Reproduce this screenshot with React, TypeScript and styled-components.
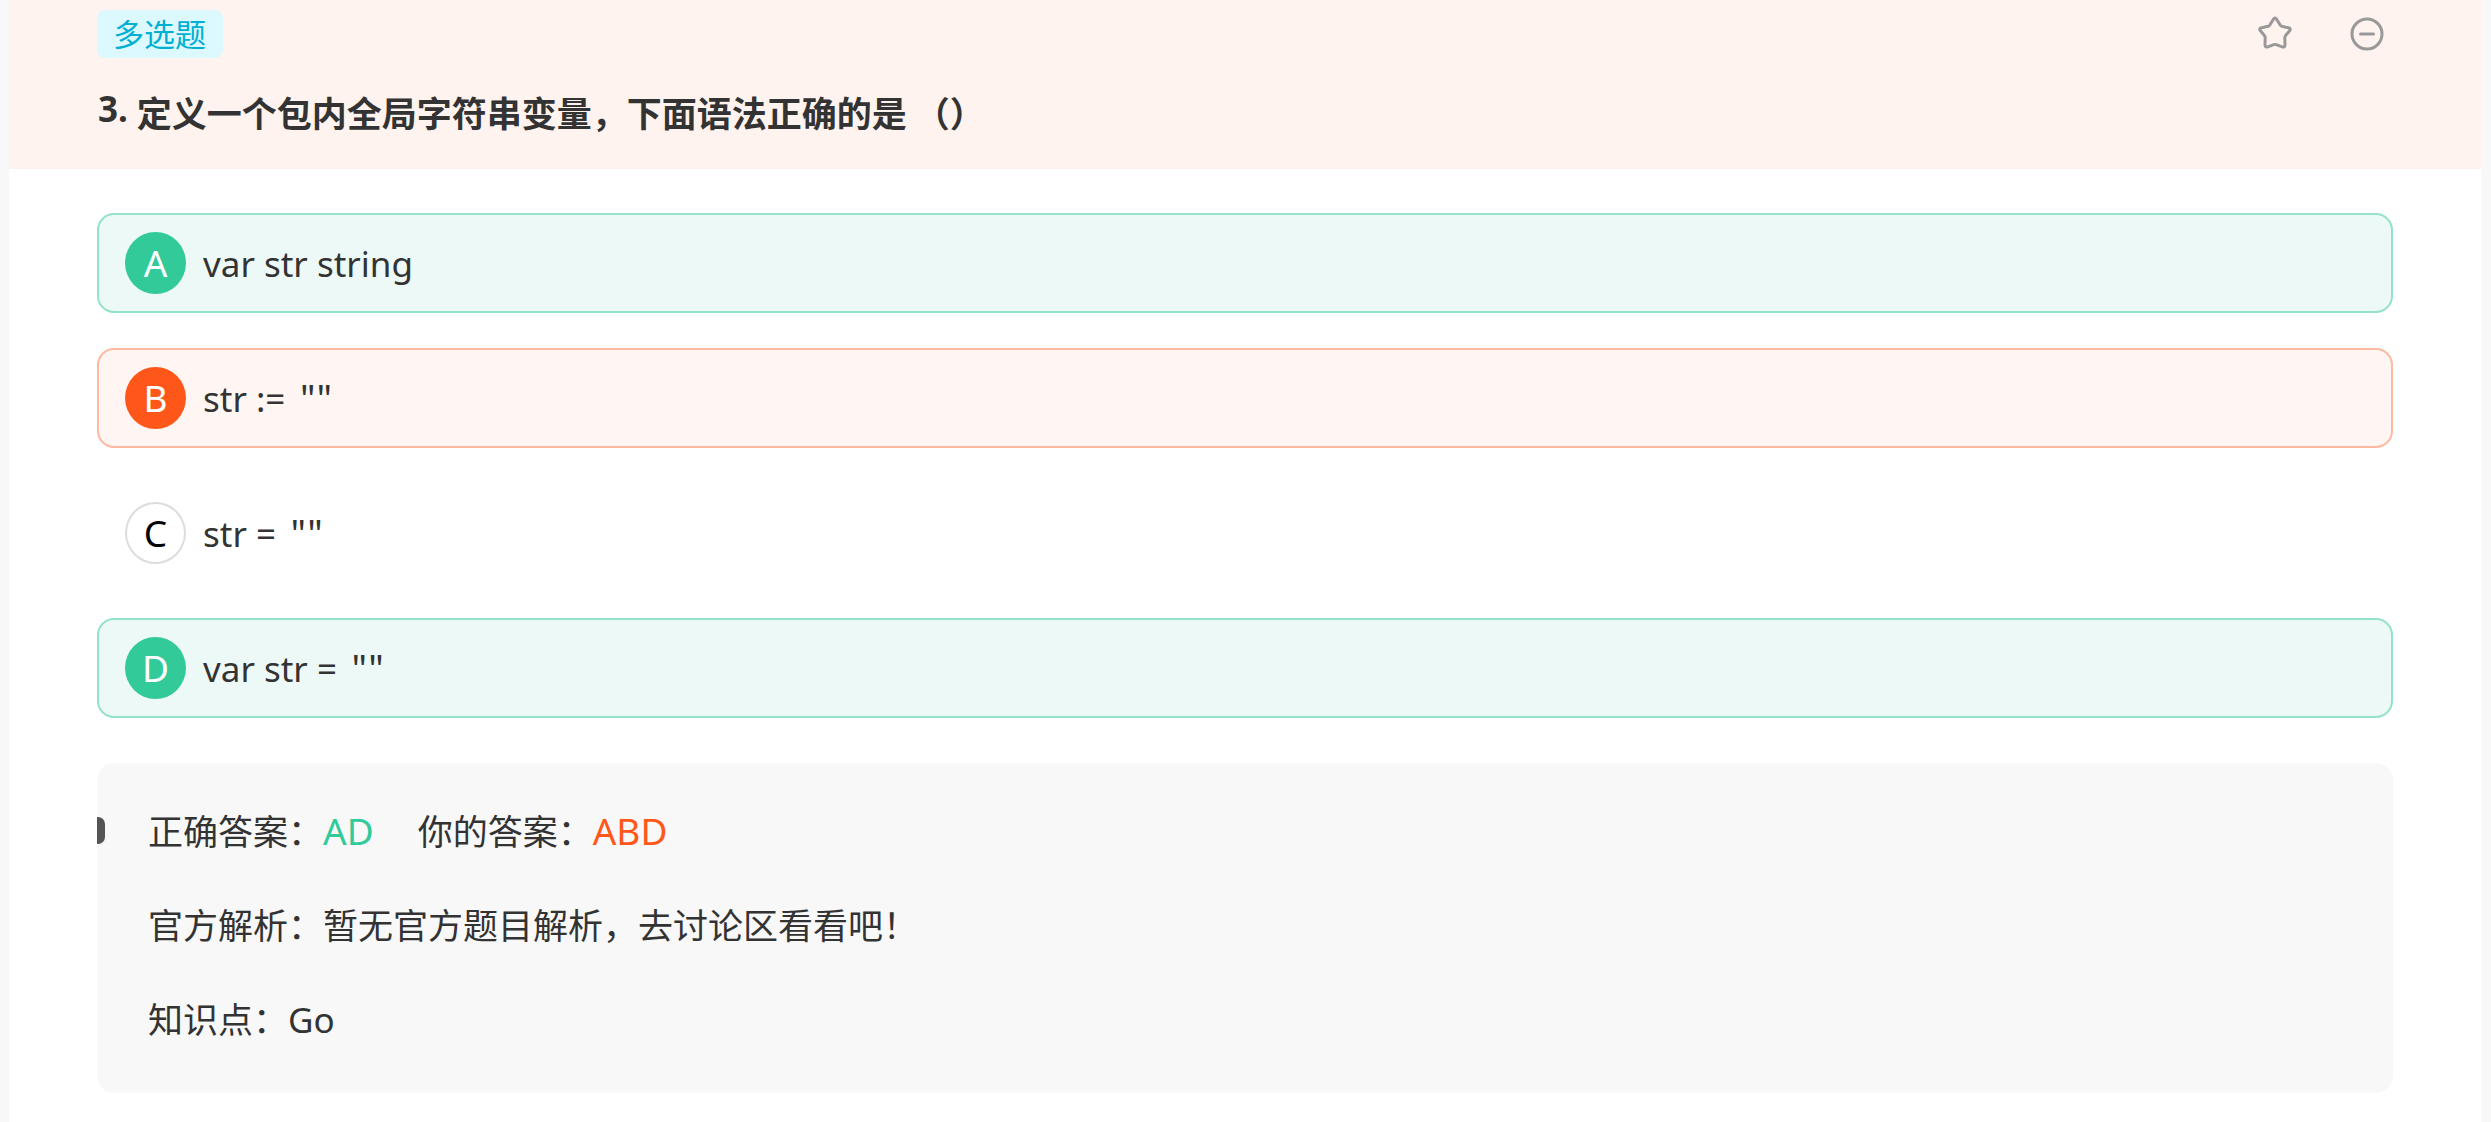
import React from "react";
import styled, { createGlobalStyle } from "styled-components";

type Status = "correct" | "wrong" | "plain";

const palette: Record<Status, { line: string; fill: string; badge: string; badgeLine: string; letter: string }> = {
  correct: { line: "#93e2c9", fill: "#edf9f7", badge: "#32ca99", badgeLine: "#32ca99", letter: "#ffffff" },
  wrong: { line: "#ffb9a1", fill: "#fff5f2", badge: "#ff571a", badgeLine: "#ff571a", letter: "#ffffff" },
  plain: { line: "transparent", fill: "transparent", badge: "#ffffff", badgeLine: "#dddddd", letter: "#000000" },
};

const GlobalStyle = createGlobalStyle`
  * { box-sizing: border-box; }
  body {
    margin: 0;
    background: #f8f8f8;
    color: #333333;
    font-family: "Noto Sans", "Noto Sans CJK SC", sans-serif;
    font-size: 35px;
    line-height: 46px;
  }
`;

const Page = styled.main`
  min-height: 100vh;
  margin: 0 10px 0 9px;
  background: #ffffff;
`;

const Header = styled.header`
  padding: 10px 88px 34px;
  background: #fff3ef;
`;

const TopBar = styled.div`
  display: flex;
  align-items: flex-start;
  justify-content: space-between;
`;

const Tag = styled.span`
  padding: 0 17px 2px 16px;
  border-radius: 8px;
  background: #dcf9ff;
  color: #00b0d2;
  font-family: "Noto Sans CJK SC", sans-serif;
  font-size: 31px;
  line-height: 46px;
`;

const Actions = styled.div`
  display: flex;
  gap: 52px;
  padding-right: 6px;
`;

const IconButton = styled.button`
  display: flex;
  padding: 4px 0;
  border: 0;
  background: none;
  color: #999999;
  cursor: pointer;
`;

const Title = styled.h1`
  display: flex;
  align-items: flex-start;
  gap: 9px;
  margin: 28px 0 0;
  padding-left: 1px;
  font-size: 35px;
  line-height: 46px;
  font-weight: 700;
`;

const TitleText = styled.span`
  padding-top: 3px;
  font-family: "Noto Sans CJK SC", sans-serif;
  white-space: pre-wrap;
`;

const Body = styled.section`
  padding: 44px 88px 28px;
`;

const Options = styled.ol`
  display: flex;
  flex-direction: column;
  gap: 35px;
  margin: 0 0 45px;
  padding: 0;
  list-style: none;
`;

const Option = styled.li<{ $status: Status }>`
  display: flex;
  align-items: center;
  gap: 17px;
  padding: 17px 26px;
  border: 2px solid ${(p) => palette[p.$status].line};
  border-radius: 17px;
  background: ${(p) => palette[p.$status].fill};
`;

const Badge = styled.span<{ $status: Status }>`
  display: flex;
  align-items: center;
  justify-content: center;
  width: 61px;
  height: 62px;
  border: 2px solid ${(p) => palette[p.$status].badgeLine};
  border-radius: 50%;
  background: ${(p) => palette[p.$status].badge};
  color: ${(p) => palette[p.$status].letter};
  font-size: 37px;
`;

const OptionText = styled.span`
  padding-top: 1px;
  line-height: 45px;
`;

const Quotes = styled.span`
  margin-left: 5px;
  font-family: "Noto Sans CJK SC", sans-serif;
  line-height: 1;
`;

const Panel = styled.div`
  position: relative;
  display: flex;
  flex-direction: column;
  gap: 48px;
  padding: 46px 51px 50px;
  border-radius: 17px;
  background: #f8f8f8;
`;

const Marker = styled.span`
  position: absolute;
  top: 54px;
  left: 0;
  width: 8px;
  height: 27px;
  border-radius: 0 7px 7px 0;
  background: #555555;
`;

const Line = styled.p`
  display: flex;
  gap: 44px;
  margin: 0;
`;

const Chinese = styled.span`
  font-family: "Noto Sans CJK SC", sans-serif;
  line-height: 1;
`;

const Answer = styled.span<{ $status: Status }>`
  color: ${(p) => palette[p.$status].badge};
  font-size: 37px;
  line-height: 1;
`;

const StarIcon = () => (
  <svg width="40" height="40" viewBox="0 0 40 40" fill="none" stroke="currentColor" strokeWidth="3" strokeLinejoin="round" aria-hidden="true">
    <path d="M18.4 5.2 Q20 2.8 21.6 5.2 L25.2 11 Q25.8 12 26.8 12.3 L33.5 13.8 Q36.4 14.6 34.6 16.8 L30.4 21.8 Q29.8 22.6 29.8 23.6 L30 30.8 Q30 33.8 27.2 32.8 L21.2 30.6 Q20 30.2 18.8 30.6 L12.8 32.8 Q10 33.8 10 30.8 L10.2 23.6 Q10.2 22.6 9.6 21.8 L5.4 16.8 Q3.6 14.6 6.5 13.8 L13.2 12.3 Q14.2 12 14.8 11 Z" />
  </svg>
);

const MinusIcon = () => (
  <svg width="40" height="40" viewBox="0 0 40 40" fill="none" stroke="currentColor" strokeWidth="3" strokeLinecap="round" aria-hidden="true">
    <circle cx="20" cy="20" r="15" />
    <path d="M13.5 20H26.5" />
  </svg>
);

const options: { letter: string; text: string; literal?: string; status: Status }[] = [
  { letter: "A", text: "var str string", status: "correct" },
  { letter: "B", text: "str := ", literal: '""', status: "wrong" },
  { letter: "C", text: "str = ", literal: '""', status: "plain" },
  { letter: "D", text: "var str = ", literal: '""', status: "correct" },
];

export default function App() {
  return (
    <>
      <GlobalStyle />
      <Page>
        <Header>
          <TopBar>
            <Tag>多选题</Tag>
            <Actions>
              <IconButton type="button" aria-label="收藏"><StarIcon /></IconButton>
              <IconButton type="button" aria-label="移除"><MinusIcon /></IconButton>
            </Actions>
          </TopBar>
          <Title>
            <span>3.</span>
            <TitleText>定义一个包内全局字符串变量，下面语法正确的是 （）</TitleText>
          </Title>
        </Header>
        <Body>
          <Options>
            {options.map((o) => (
              <Option key={o.letter} $status={o.status}>
                <Badge $status={o.status}>{o.letter}</Badge>
                <OptionText>
                  {o.text}
                  {o.literal && <Quotes>{o.literal}</Quotes>}
                </OptionText>
              </Option>
            ))}
          </Options>
          <Panel>
            <Marker />
            <Line>
              <span><Chinese>正确答案：</Chinese><Answer $status="correct">AD</Answer></span>
              <span><Chinese>你的答案：</Chinese><Answer $status="wrong">ABD</Answer></span>
            </Line>
            <Line><span><Chinese>官方解析：暂无官方题目解析，去讨论区看看吧！</Chinese></span></Line>
            <Line><span><Chinese>知识点：</Chinese>Go</span></Line>
          </Panel>
        </Body>
      </Page>
    </>
  );
}
